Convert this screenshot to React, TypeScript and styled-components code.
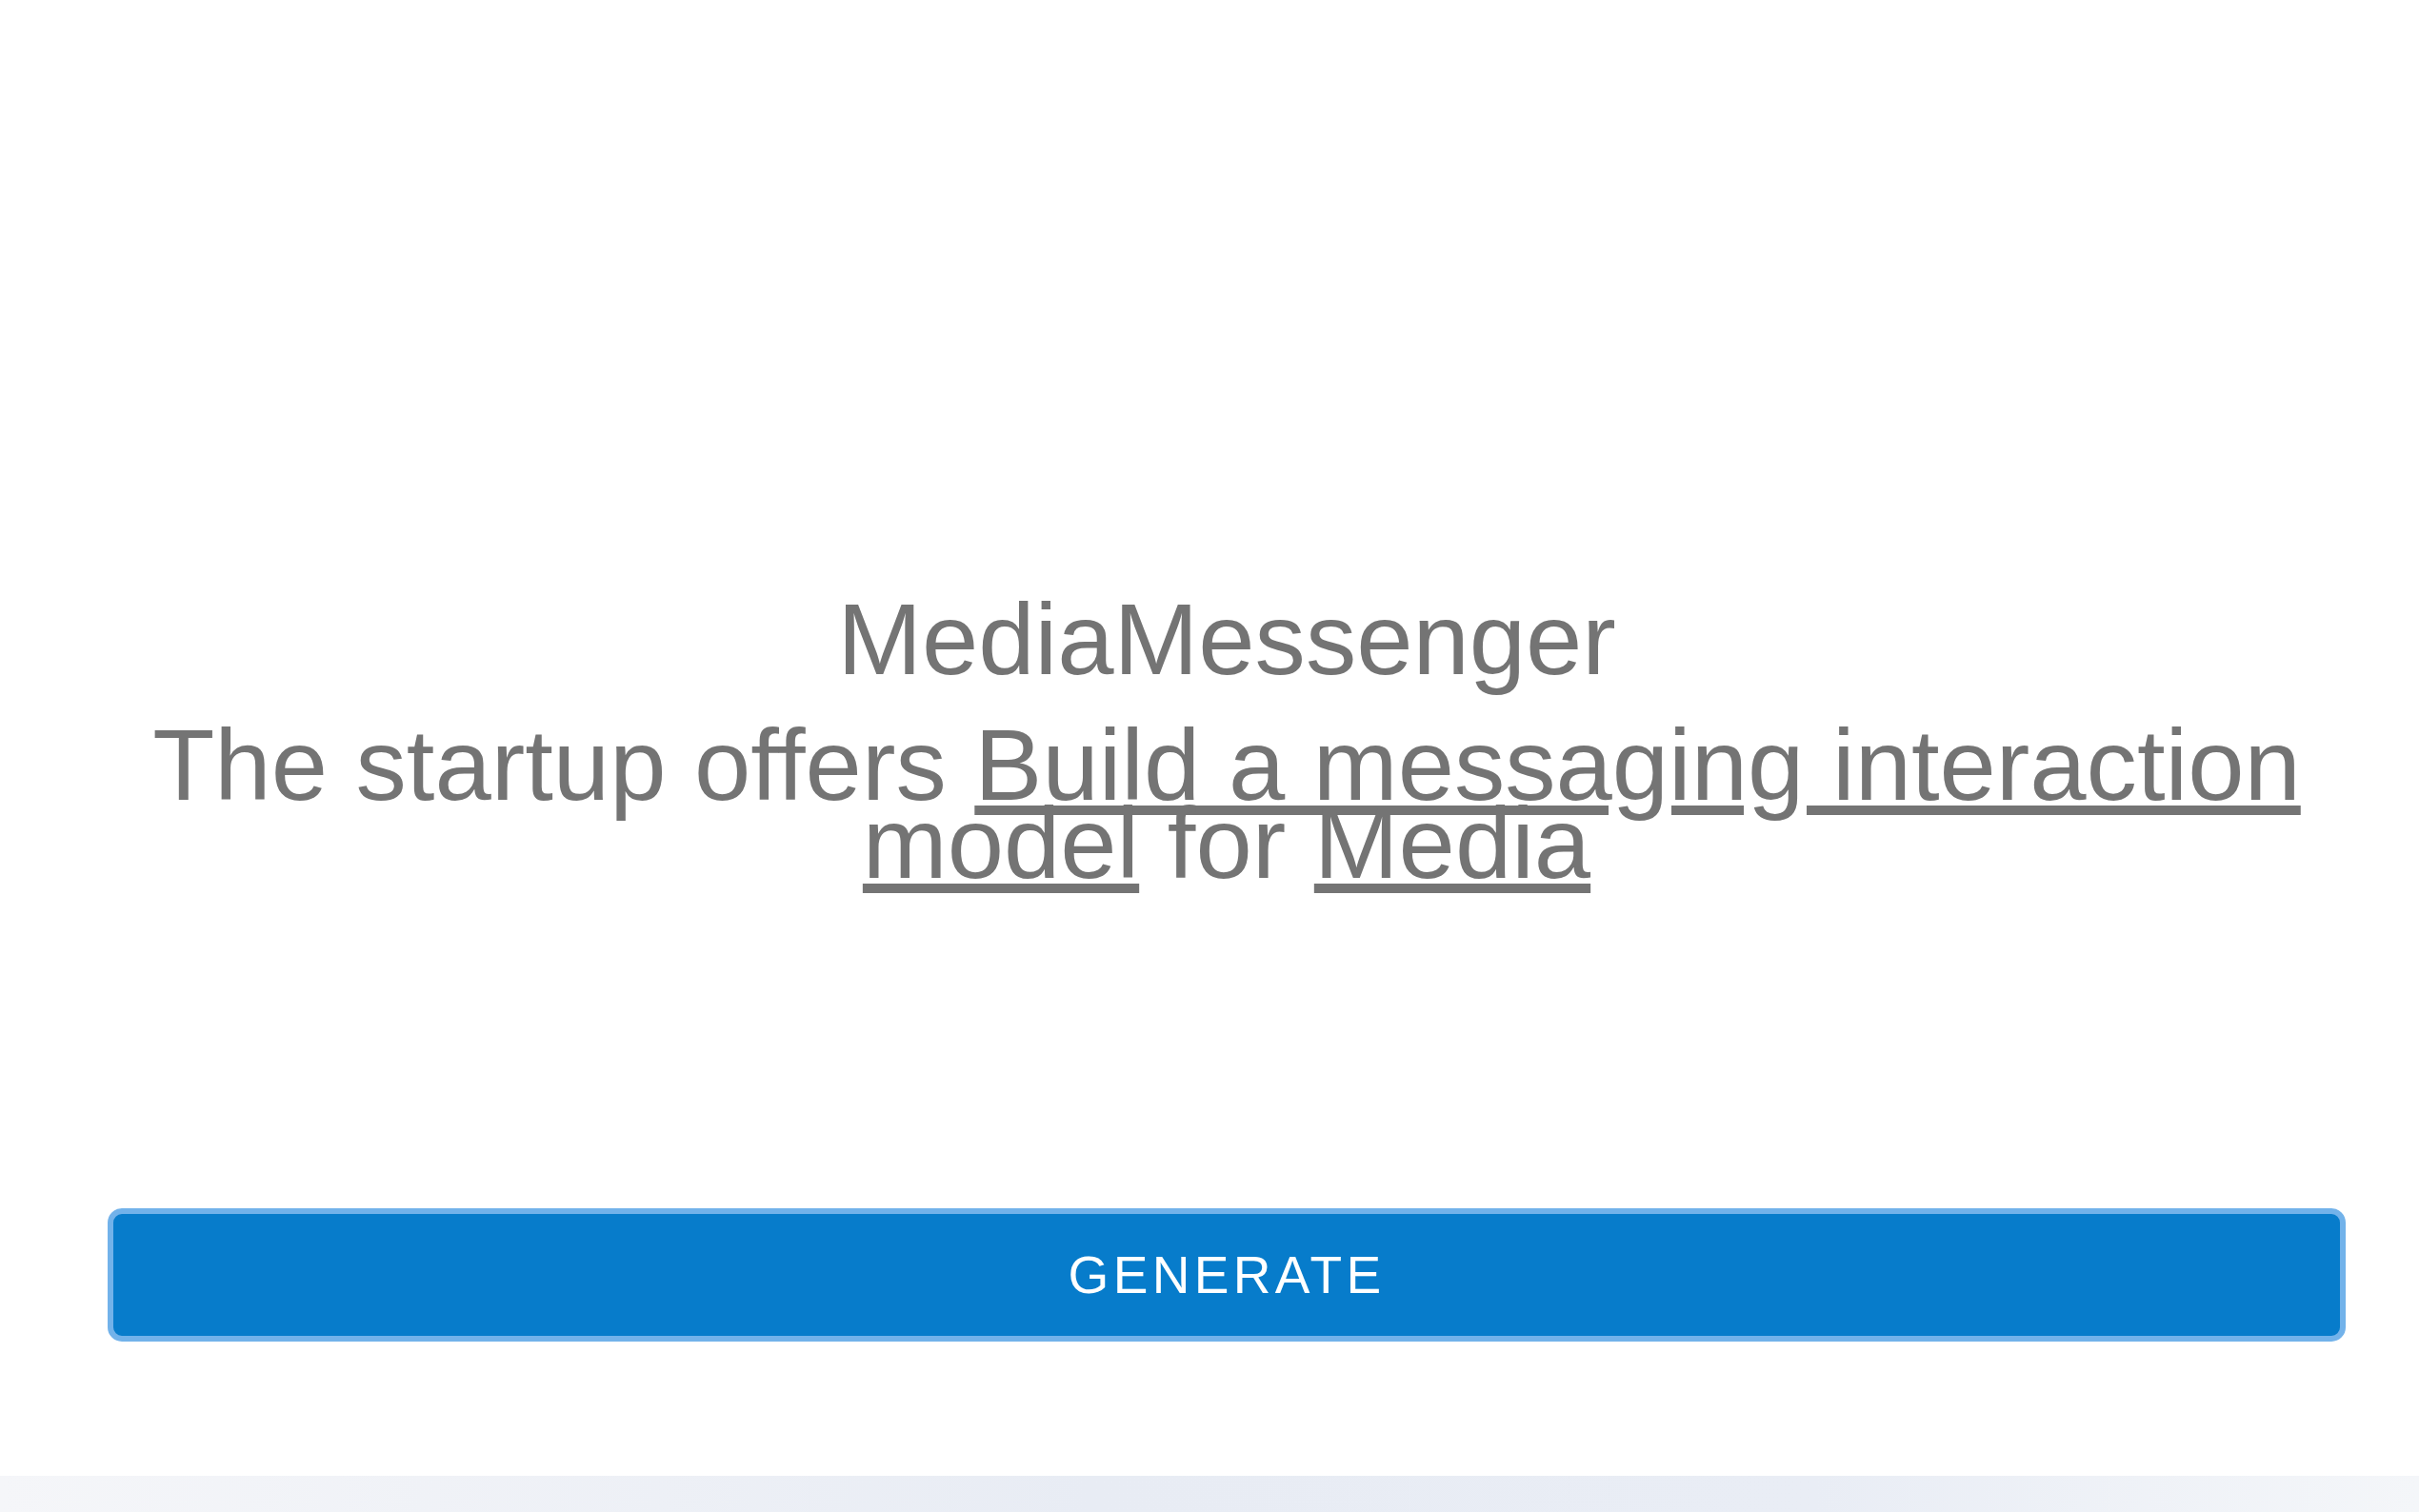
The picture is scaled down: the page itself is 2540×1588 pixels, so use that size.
import styled, { createGlobalStyle } from 'styled-components';

const GlobalStyle = createGlobalStyle`
  html, body {
    margin: 0;
    padding: 0;
    background: #ffffff;
    font-family: "Liberation Sans", Arial, sans-serif;
  }
`;

const Page = styled.div`
  display: flex;
  flex-direction: column;
  width: 100%;
  height: 1588px;
  overflow: hidden;
`;

const Main = styled.main`
  flex: 1;
  display: flex;
  flex-direction: column;
  align-items: stretch;
  padding: 630px 77px 0 113px;
  background: #ffffff;
`;

const Hero = styled.section`
  display: flex;
  flex-direction: column;
  align-items: center;
  text-align: center;
  color: #747474;
  font-size: 106.6px;
  line-height: 82px;
  padding: 0 4px;
`;

const Title = styled.div`
  margin-bottom: 50px;
`;

const Pitch = styled.p`
  margin: 0;
`;

const Mark = styled.span`
  text-decoration: underline;
`;

const GenerateButton = styled.button`
  margin-top: 343px;
  height: 140px;
  width: 100%;
  box-sizing: border-box;
  border: 6px solid #72b2ea;
  border-radius: 15px;
  background: #077ccb;
  color: #ffffff;
  font-family: "Liberation Sans", Arial, sans-serif;
  font-size: 55px;
  letter-spacing: 4.3px;
  text-transform: uppercase;
  cursor: pointer;
`;

const Footer = styled.footer`
  height: 38px;
  background: linear-gradient(90deg, #f5f6f9 0%, #e8ecf4 45%, #e9edf5 75%, #f4f6f9 100%);
`;

export default function App() {
  return (
    <Page>
      <GlobalStyle />
      <Main>
        <Hero>
          <Title>MediaMessenger</Title>
          <Pitch>
            The startup offers <Mark>Build a messaging interaction model</Mark> for <Mark>Media</Mark>
          </Pitch>
        </Hero>
        <GenerateButton>Generate</GenerateButton>
      </Main>
      <Footer />
    </Page>
  );
}
